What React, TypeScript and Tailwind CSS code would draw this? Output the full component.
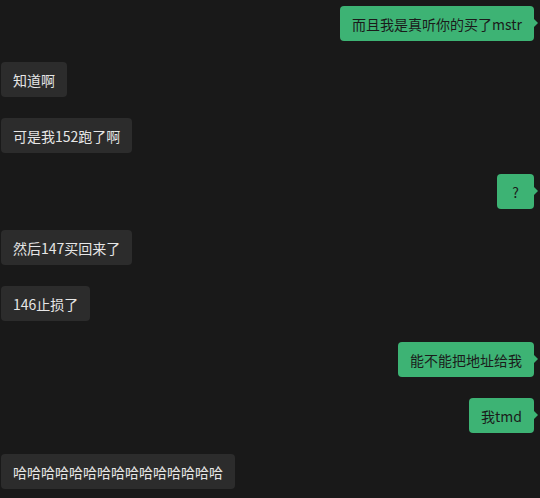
import React from "react";

type Msg = { text: string; me: boolean };

const msgs: Msg[] = [
  { text: "而且我是真听你的买了mstr", me: true },
  { text: "知道啊", me: false },
  { text: "可是我152跑了啊", me: false },
  { text: "?", me: true },
  { text: "然后147买回来了", me: false },
  { text: "146止损了", me: false },
  { text: "能不能把地址给我", me: true },
  { text: "我tmd", me: true },
  { text: "哈哈哈哈哈哈哈哈哈哈哈哈哈哈哈", me: false },
];

export default function App() {
  return (
    <div
      className="w-[540px] h-[498px] bg-[#191919] overflow-hidden flex flex-col gap-[21px] pt-[6px] pl-[1px] pr-[6px]"
      style={{ fontFamily: '"Noto Sans CJK SC", "Noto Sans", sans-serif' }}
    >
      {msgs.map((m, i) => (
        <div key={i} className={m.me ? "flex justify-end" : "flex justify-start"}>
          {m.me ? (
            <div className="relative h-[35px] min-w-[37px] px-3 flex items-center justify-center rounded-[4px] bg-[#3db374] text-[#1b1b1b] text-[14px] leading-none">
              {m.text}
              <span className="absolute right-[-4px] top-[12px] w-0 h-0 border-y-[5px] border-y-transparent border-l-[5px] border-l-[#3db374]" />
            </div>
          ) : (
            <div className="h-[35px] px-3 flex items-center rounded-[4px] bg-[#2c2c2c] text-[#e6e6e6] text-[14px] leading-none">
              {m.text}
            </div>
          )}
        </div>
      ))}
    </div>
  );
}
